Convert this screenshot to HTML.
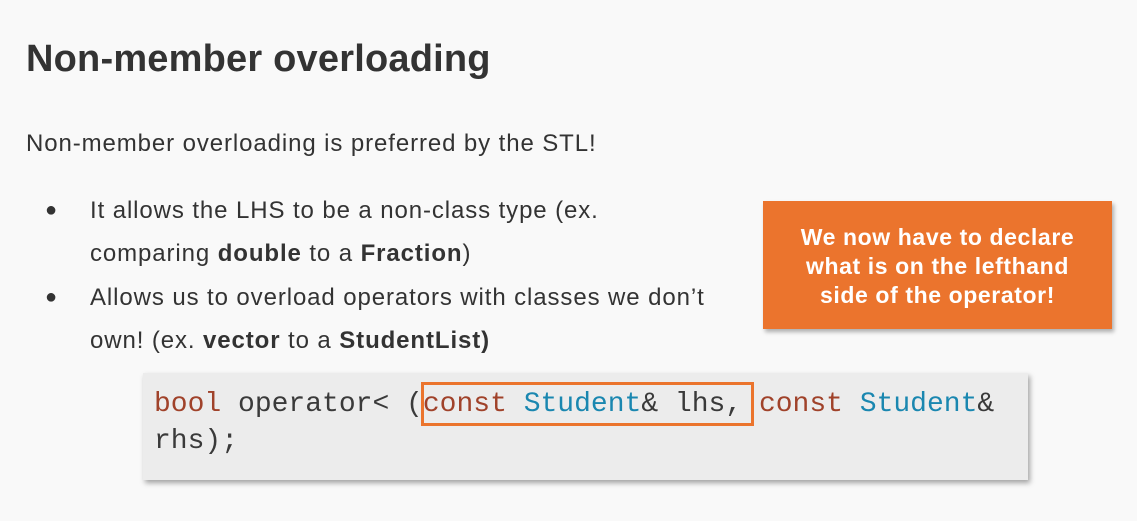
<!DOCTYPE html>
<html><head><style>
body{margin:0;width:1137px;height:521px;background:#f9f9f9;position:relative;overflow:hidden;font-family:"Liberation Sans",sans-serif;color:#333}
.t{position:absolute;left:26px;top:38px;font-size:38px;font-weight:bold;color:#333;letter-spacing:0.2px}
.p{position:absolute;left:26px;top:130px;font-size:24px;letter-spacing:0.9px}
.b{position:absolute;left:90px;font-size:24px;letter-spacing:0.9px;line-height:43px;width:680px}
.dot{position:absolute;left:45px;font-size:20px}
.or{position:absolute;left:763px;top:201px;width:349px;height:128px;background:#eb742d;color:#fff;font-weight:bold;font-size:23px;letter-spacing:0.6px;text-align:center;line-height:29px;box-sizing:border-box;padding-top:22px;box-shadow:2px 3px 4px rgba(0,0,0,.3)}
.code{position:absolute;left:143px;top:373px;width:885px;height:107px;background:#ececec;box-shadow:2px 3px 5px rgba(0,0,0,.35);font-family:"Liberation Mono",monospace;font-size:28px;color:#3a3a3a;line-height:37px}
.k{color:#a0422a}.s{color:#1a87b0}
.hl{position:absolute;left:278px;top:9px;width:333px;height:44px;border:3px solid #eb742d;box-sizing:border-box}
</style></head><body>
<div class="t">Non-member overloading</div>
<div class="p">Non-member overloading is preferred by the STL!</div>
<div class="dot" style="top:199px">●</div>
<div class="b" style="top:189px">It allows the LHS to be a non-class type (ex.<br>comparing <b>double</b> to a <b>Fraction</b>)</div>
<div class="dot" style="top:286px">●</div>
<div class="b" style="top:276px">Allows us to overload operators with classes we don’t<br>own! (ex. <b>vector</b> to a <b>StudentList)</b></div>
<div class="or">We now have to declare<br>what is on the lefthand<br>side of the operator!</div>
<div class="code"><div class="hl"></div><div style="position:absolute;left:11px;top:13px;white-space:pre"><span class="k">bool</span> operator&lt; (<span class="k">const</span> <span class="s">Student</span>&amp; lhs, <span class="k">const</span> <span class="s">Student</span>&amp;
rhs);</div></div>
</body></html>
